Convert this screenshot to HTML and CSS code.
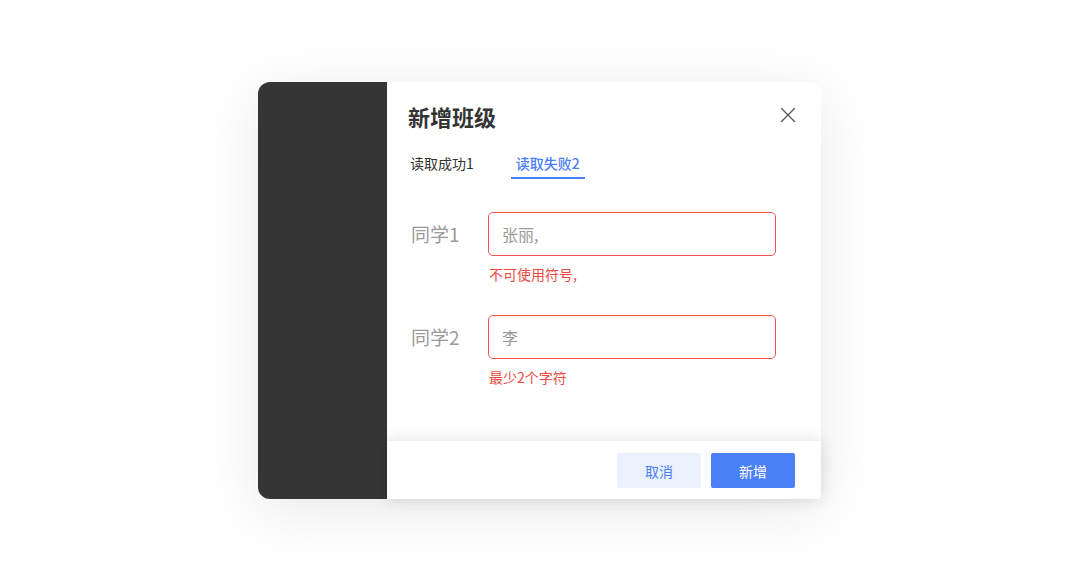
FILE: index.html
```html
<!DOCTYPE html>
<html lang="zh-CN">
<head>
<meta charset="utf-8">
<title>新增班级</title>
<link rel="stylesheet" href="styles.css">
</head>
<body>
<div class="stage">
  <div class="dialog">
    <div class="side"></div>
    <div class="main">
      <div class="body">
        <div class="header">
          <h1 class="title">新增班级</h1>
          <svg class="close" width="16" height="16" viewBox="0 0 16 16" aria-hidden="true">
            <path d="M1.5 1.5 L14.5 14.5 M14.5 1.5 L1.5 14.5" stroke="#5a5a5a" stroke-width="1.4" fill="none" stroke-linecap="round"/>
          </svg>
        </div>
        <div class="tabs">
          <span class="tab">读取成功1</span>
          <span class="tab active">读取失败2</span>
        </div>
        <div class="form">
          <div class="row">
            <span class="label">同学1</span>
            <div class="field">
              <div class="input">张丽,</div>
              <div class="error">不可使用符号,</div>
            </div>
          </div>
          <div class="row">
            <span class="label">同学2</span>
            <div class="field">
              <div class="input">李</div>
              <div class="error">最少2个字符</div>
            </div>
          </div>
        </div>
      </div>
      <div class="footer">
        <button class="btn btn-ghost">取消</button>
        <button class="btn btn-primary">新增</button>
      </div>
    </div>
  </div>
</div>
</body>
</html>
```

FILE: styles.css
```css
* { box-sizing: border-box; }

html, body {
  margin: 0;
  padding: 0;
  background: #ffffff;
  font-family: "Noto Sans CJK SC", "Noto Sans", "Liberation Sans", sans-serif;
}

.stage {
  width: 1080px;
  height: 581px;
  padding: 82px 0 0 258px;
}

.dialog {
  display: flex;
  width: 563px;
  height: 417px;
  border-radius: 12px;
  box-shadow: 0 12px 60px rgba(0, 0, 0, 0.09);
}

.side {
  width: 129px;
  background: #353535;
  border-radius: 12px 0 0 12px;
}

.main {
  width: 434px;
  display: flex;
  flex-direction: column;
}

.body {
  height: 359px;
  width: 433px;
  background: #ffffff;
  border-radius: 0 12px 0 0;
  padding: 19px 25px 0 21px;
}

.header {
  display: flex;
  justify-content: space-between;
  align-items: center;
  height: 30px;
}

.title {
  margin: 0;
  font-size: 22px;
  line-height: 30px;
  font-weight: 700;
  color: #333333;
}

.close {
  margin-right: -1px;
  margin-top: -2px;
}

.tabs {
  display: flex;
  gap: 32px;
  margin-top: 22px;
  margin-left: -15px;
}

.tab {
  font-size: 14px;
  line-height: 20px;
  color: #333333;
  padding: 0 5px 4px;
  border-bottom: 2px solid transparent;
  margin-left: 12px;
}

.tab.active {
  margin-left: 0;
  color: #4a7ef6;
  font-weight: 500;
  border-bottom-color: #4a7ef6;
}

.form {
  margin-top: 33px;
  margin-left: 3px;
  display: flex;
  flex-direction: column;
  gap: 31px;
}

.row {
  display: flex;
  align-items: flex-start;
}

.label {
  width: 77px;
  height: 44px;
  line-height: 44px;
  font-size: 19px;
  color: #9a9a9a;
}

.field {
  width: 288px;
}

.input {
  height: 44px;
  border: 1px solid #f0554e;
  border-radius: 5px;
  padding: 0 13px;
  font-size: 16px;
  line-height: 42px;
  color: #999999;
}

.error {
  margin-top: 8px;
  font-size: 14px;
  line-height: 20px;
  color: #ec4a41;
  padding-left: 1px;
}

.footer {
  height: 58px;
  background: #ffffff;
  border-radius: 0 0 4px 0;
  box-shadow: 0 0 16px rgba(0, 0, 0, 0.14);
  display: flex;
  justify-content: flex-end;
  align-items: flex-start;
  gap: 10px;
  padding: 12px 26px 0 0;
  position: relative;
}

.btn {
  width: 84px;
  height: 35px;
  border: none;
  border-radius: 2px;
  font-family: inherit;
  font-size: 14px;
  padding: 0;
  cursor: pointer;
}

.btn-ghost {
  background: #ebf2fe;
  color: #4a7ef6;
}

.btn-primary {
  background: #4b80f8;
  color: #ffffff;
}
```
